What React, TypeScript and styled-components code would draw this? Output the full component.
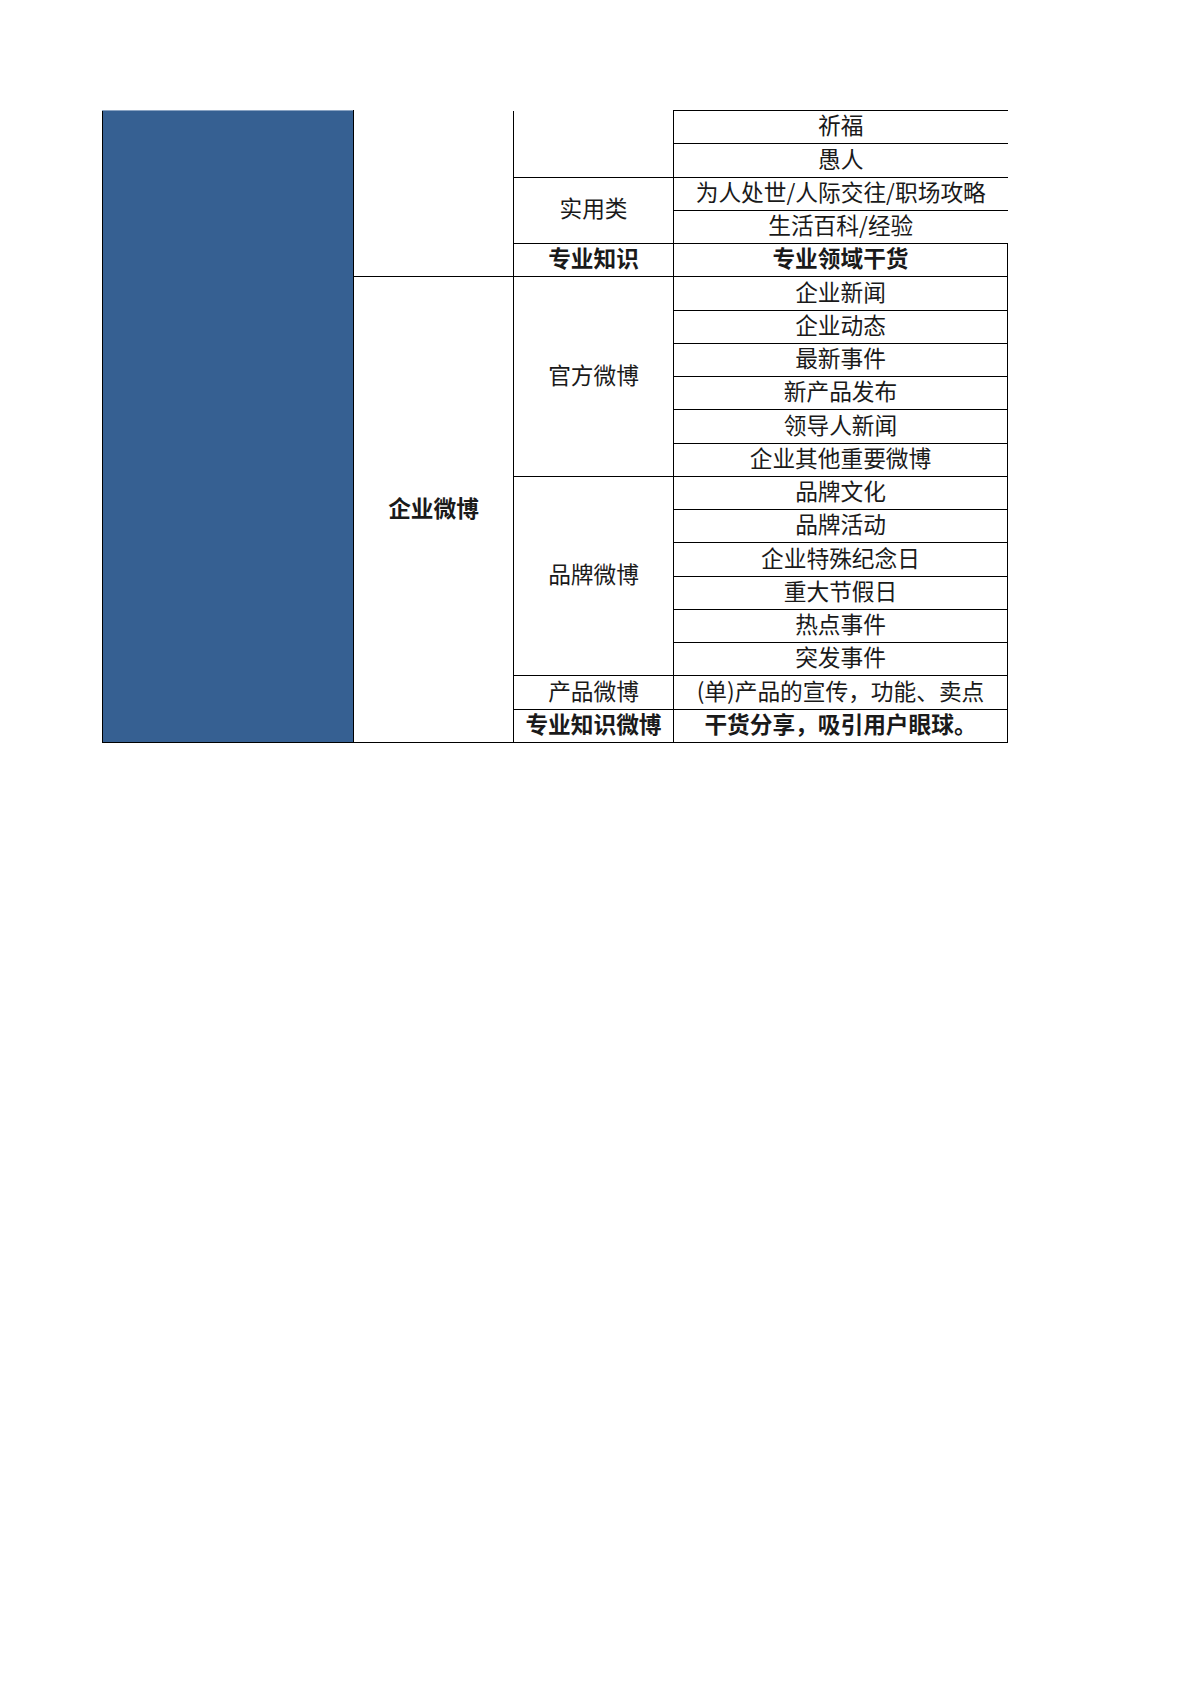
import React from "react";
import styled, { createGlobalStyle } from "styled-components";

const GlobalStyle = createGlobalStyle`
  html, body {
    margin: 0;
    padding: 0;
    background: #ffffff;
  }
  body {
    font-family: "Noto Sans CJK SC", "Noto Sans", "Liberation Sans", sans-serif;
    color: #000;
  }
`;

const Page = styled.div`
  width: 1200px;
  min-height: 1698px;
  box-sizing: border-box;
  padding: 110px 0 0 102px;
`;

const Sheet = styled.table`
  border-collapse: collapse;
  table-layout: fixed;
  width: 905px;
`;

const Row = styled.tr`
  height: 33.26px;
`;

const Cell = styled.td<{ $bold?: boolean; $open?: boolean; $noRight?: boolean }>`
  padding: 0 0 3px;
  border: 1px solid #000;
  ${({ $open }) => $open && "border-top: none;"}
  ${({ $noRight }) => $noRight && "border-right: none;"}
  font-size: 22.7px;
  line-height: 1;
  font-weight: ${({ $bold }) => ($bold ? 700 : 400)};
  text-align: center;
  vertical-align: middle;
  white-space: nowrap;
  color: #1a1a1a;
`;

const BlueCell = styled.td`
  padding: 0;
  background: #366092;
  border: 1px solid #000;
  border-top: 1px solid #8aa3c2;
`;

type Item = { text: string; bold?: boolean };

const official: Item[] = [
  { text: "企业新闻" },
  { text: "企业动态" },
  { text: "最新事件" },
  { text: "新产品发布" },
  { text: "领导人新闻" },
  { text: "企业其他重要微博" },
];

const brand: Item[] = [
  { text: "品牌文化" },
  { text: "品牌活动" },
  { text: "企业特殊纪念日" },
  { text: "重大节假日" },
  { text: "热点事件" },
  { text: "突发事件" },
];

export default function App() {
  return (
    <>
      <GlobalStyle />
      <Page>
        <Sheet>
          <colgroup>
            <col style={{ width: 251 }} />
            <col style={{ width: 160 }} />
            <col style={{ width: 160 }} />
            <col style={{ width: 334 }} />
          </colgroup>
          <tbody>
            <Row>
              <BlueCell rowSpan={19} />
              <Cell rowSpan={5} $open />
              <Cell rowSpan={2} $open />
              <Cell $noRight>祈福</Cell>
            </Row>
            <Row>
              <Cell $noRight>愚人</Cell>
            </Row>
            <Row>
              <Cell rowSpan={2}>实用类</Cell>
              <Cell $noRight>为人处世/人际交往/职场攻略</Cell>
            </Row>
            <Row>
              <Cell $noRight>生活百科/经验</Cell>
            </Row>
            <Row>
              <Cell $bold>专业知识</Cell>
              <Cell $bold>专业领域干货</Cell>
            </Row>

            {official.map((item, i) => (
              <Row key={item.text}>
                {i === 0 && (
                  <>
                    <Cell rowSpan={14} $bold>
                      企业微博
                    </Cell>
                    <Cell rowSpan={6}>官方微博</Cell>
                  </>
                )}
                <Cell>{item.text}</Cell>
              </Row>
            ))}

            {brand.map((item, i) => (
              <Row key={item.text}>
                {i === 0 && <Cell rowSpan={6}>品牌微博</Cell>}
                <Cell>{item.text}</Cell>
              </Row>
            ))}

            <Row>
              <Cell>产品微博</Cell>
              <Cell>(单)产品的宣传，功能、卖点</Cell>
            </Row>
            <Row>
              <Cell $bold>专业知识微博</Cell>
              <Cell $bold>干货分享，吸引用户眼球。</Cell>
            </Row>
          </tbody>
        </Sheet>
      </Page>
    </>
  );
}
